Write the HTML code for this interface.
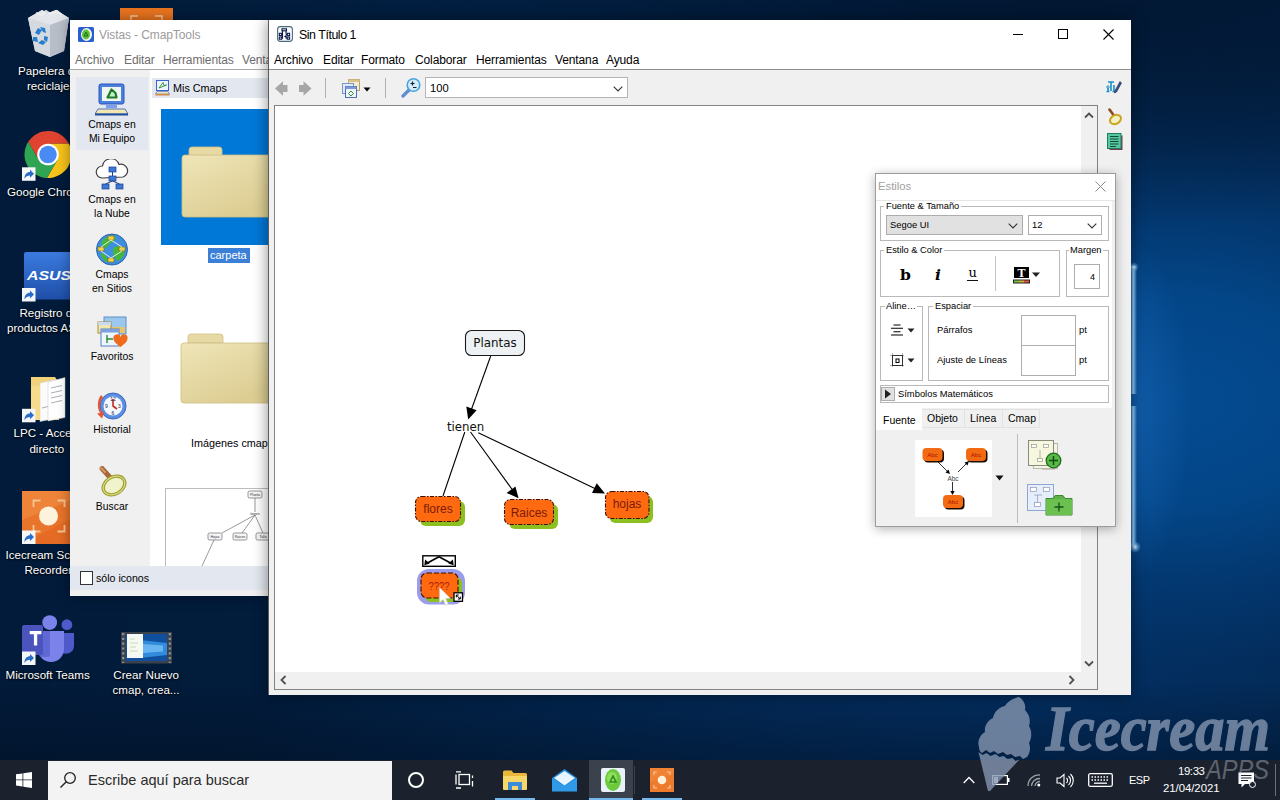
<!DOCTYPE html>
<html lang="es">
<head>
<meta charset="utf-8">
<title>CmapTools - Sin Título 1</title>
<style>
*{box-sizing:border-box;margin:0;padding:0}
html,body{width:1280px;height:800px;overflow:hidden}
body{font-family:"Liberation Sans","DejaVu Sans",sans-serif;font-size:12px;color:#000;position:relative;
background:#04132b}
.abs{position:absolute}
.t{position:absolute;white-space:nowrap;line-height:1}
#desk{position:absolute;left:0;top:0;width:1280px;height:800px;overflow:hidden;
background:
radial-gradient(ellipse 800px 240px at 1050px -10px,rgba(1,16,36,.8) 0,rgba(1,16,36,.55) 45%,rgba(1,16,36,0) 100%),
linear-gradient(0deg,rgba(1,14,32,.45) 40px,rgba(1,14,32,0) 120px),
radial-gradient(ellipse 60px 170px at 1131px 410px,rgba(30,110,195,.5),rgba(20,90,170,0) 100%),
radial-gradient(ellipse 500px 340px at 1180px 400px,#044b90 0,#034688 30%,rgba(3,58,116,.8) 55%,rgba(3,48,100,.4) 78%,rgba(2,44,92,0) 100%),
linear-gradient(90deg,#021b3a 0,#021c3c 250px,#02244c 500px,#032c5c 800px,#032f62 1050px,#032a56 1280px)}
.dl{position:absolute;color:#fff;font-size:11.6px;line-height:15px;text-align:left;white-space:nowrap;text-shadow:0 1px 2px rgba(0,0,0,.9),0 0 2px rgba(0,0,0,.6)}
/* taskbar */
#tb{position:absolute;left:0;top:760px;width:1280px;height:40px;background:#1b222d}
#search{position:absolute;left:48px;top:1px;width:344px;height:39px;background:#f3f3f3}
.win{position:absolute;background:#f0f0f0}
.menu{position:absolute;font-size:12px;letter-spacing:-.12px;white-space:nowrap;line-height:14px}
.fs{position:absolute;border:1px solid #b9b9b9}
.fs>span{position:absolute;top:-6px;left:3px;background:#fff;padding:0 2px;font-size:9.3px;line-height:10px;white-space:nowrap;color:#000}
.s9{font-size:9.4px}
</style>
</head>
<body>
<div id="desk">
<svg class="abs" style="left:0;top:0" width="280" height="760" viewBox="0 0 280 760" font-family="'Liberation Sans',sans-serif">
<defs>
 <g id="sc"><rect x="0" y="0" width="13.500" height="13.500" fill="#f4f6f8"/><path d="M2.500 11.500c0-4.500 2.200-6.800 5.500-6.800V2.500l4 4-4 4V8.200c-2.400 0-4.300 1-5.500 3.300z" fill="#2a6cc8"/></g>
 <linearGradient id="asg" x1="0" y1="0" x2="0" y2="1"><stop offset="0" stop-color="#3b7be0"/><stop offset="1" stop-color="#1f4fa8"/></linearGradient>
</defs>
<!-- orange behind -->
<rect x="120" y="8" width="53" height="14" fill="#e8731f"/>
<path d="M131 22v-6h7M155 16h7v6" stroke="#f7c79a" stroke-width="1.500" fill="none"/>
<!-- recycle bin -->
<g opacity=".93">
 <path d="M28 18l14-8 6 3 8-3 13 8-5 33-14 6-15-6z" fill="#dfe3e8"/>
 <path d="M28 18l14-8 6 3 8-3 13 8-19 7z" fill="#f3f5f7"/>
 <path d="M50 25l19-7-5 33-14 6z" fill="#c5cbd3"/>
 <path d="M28 18l22 7v32l-15-6z" fill="#e6e9ed"/>
 <path d="M36 13l5 2 5-4 5 3 6-3 5 4" stroke="#fff" stroke-width="2" fill="none" opacity=".9"/>
 <g fill="#2a86d8"><path d="M35 33l3-5 4 2-3 5zM40 27l5 1 1 5-3-1zM33 37l4 0 1 5-5-1zM38 43l5 2 3-3-4-2zM44 36l4 1-1 5-3-2z"/></g>
</g>
<!-- chrome -->
<g>
 <path d="M28.210 141.830A23.500 23.500 0 0 1 68.870 143.700L48 143.700 48 154.500 38.650 159.900z" fill="#e0432f"/>
 <path d="M68.870 143.700A23.500 23.500 0 0 1 46.920 177.970L57.350 159.900 48 154.500 48 143.700z" fill="#f6c31a"/>
 <path d="M46.920 177.970A23.500 23.500 0 0 1 28.210 141.830L38.650 159.900 48 154.500 57.350 159.900z" fill="#2fa553"/>
 <circle cx="48" cy="154.500" r="10.800" fill="#fff"/><circle cx="48" cy="154.500" r="8.700" fill="#4a8af4"/>
 <use href="#sc" x="22" y="167.300"/>
</g>
<!-- asus -->
<g>
 <rect x="24" y="252" width="48" height="47.500" rx="2" fill="url(#asg)"/>
 <text x="27" y="280" font-size="13" font-weight="bold" font-style="italic" fill="#fff" textLength="44" lengthAdjust="spacingAndGlyphs">ASUS</text>
 <use href="#sc" x="22" y="288"/>
</g>
<!-- LPC -->
<g>
 <path d="M31 377h24l2 3h2v40H31z" fill="#f1d27a"/>
 <path d="M40 383l15-3.500v39l-15 3z" fill="#fbfbfb" stroke="#c9c9c9" stroke-width=".5"/>
 <path d="M48 382l17-4.500v40l-17 3.500z" fill="#fff" stroke="#c4c4c4" stroke-width=".5"/>
 <path d="M31 386h9v34h-9z" fill="#f6db8a"/>
 <path d="M51 388l11-2.500M51 393l11-2.500M51 398l11-2.500M51 403l11-2.500M42 408l6-1.500" stroke="#a9afb8" stroke-width="1"/>
 <use href="#sc" x="22" y="408.800"/>
</g>
<!-- icecream -->
<g>
 <rect x="22" y="491" width="50" height="53" fill="#e9742c"/>
 <path d="M22 520L72 500V491H22z" fill="#f08a40" opacity=".7"/>
 <path d="M22 544l50-26v26z" fill="#e2651f" opacity=".6"/>
 <circle cx="48.500" cy="516" r="9.500" fill="#fdf3dc"/>
 <path d="M33.500 507v-6.500h7M57.500 500.500h7v6.500M64.500 525v6.500h-7M40.500 531.500h-7V525" stroke="#f8c690" stroke-width="1.800" fill="none"/>
 <use href="#sc" x="22" y="530.500"/>
</g>
<!-- teams -->
<g>
 <circle cx="66.900" cy="624.700" r="5.400" fill="#5059c9"/>
 <path d="M61 633h13v13a8 8 0 0 1-13 6z" fill="#5059c9"/>
 <circle cx="49.700" cy="622.600" r="7.400" fill="#7b83eb"/>
 <path d="M38 631h26v18a13 13 0 0 1-26 0z" fill="#7b83eb"/>
 <path d="M38 631h12v24a2 2 0 0 1-2 2H40a13 13 0 0 1-2-8z" fill="#5a62d0" opacity=".8"/>
 <rect x="22" y="625" width="21" height="30" rx="2" fill="#4b53bc"/>
 <path d="M29.700 631h11.700v3.200h-4.200v11.400h-3.300v-11.400h-4.200z" fill="#fff"/>
 <use href="#sc" x="22" y="651.500"/>
</g>
<!-- video -->
<g>
 <rect x="121" y="632" width="51" height="31.500" fill="#3c424c"/>
 <rect x="126" y="634" width="41" height="27" fill="#0f4f9e"/>
 <path d="M140 640l27 3v12l-27 3z" fill="#3ea0f0" opacity=".75"/>
 <path d="M143 644l20 1.500v6l-20 1.500z" fill="#8fd0ff" opacity=".6"/>
 <rect x="127" y="634" width="16" height="24" fill="#f6f8f4"/>
 <path d="M123.200 633v30M169.800 633v30" stroke="#8d939c" stroke-width="2.200" stroke-dasharray="2.200 2.600"/>
 <path d="M130 639h5M130 643h8M130 647h6M130 651h8" stroke="#bfe0b0" stroke-width="1.200"/>
</g>
</svg>
<div class="dl" style="left:18px;top:63px">Papelera de</div>
<div class="dl" style="left:27px;top:78px">reciclaje</div>
<div class="dl" style="left:7px;top:184px">Google Chrome</div>
<div class="dl" style="left:19.4px;top:305px">Registro de</div>
<div class="dl" style="left:7px;top:320px">productos AS…</div>
<div class="dl" style="left:13.5px;top:425px">LPC - Acceso</div>
<div class="dl" style="left:29.4px;top:441px">directo</div>
<div class="dl" style="left:5.6px;top:547px">Icecream Screen</div>
<div class="dl" style="left:24.4px;top:562px">Recorder</div>
<div class="dl" style="left:5.5px;top:667px">Microsoft Teams</div>
<div class="dl" style="left:113.3px;top:667px">Crear Nuevo</div>
<div class="dl" style="left:112.5px;top:682px">cmap, crea...</div>
<!-- windows light strip -->
<div class="abs" style="left:1131px;top:266px;width:6px;height:128px;background:linear-gradient(90deg,rgba(40,110,190,.5),#9fd0f4 35%,#5aa2e0 60%,rgba(30,100,180,0))"></div>
<div class="abs" style="left:1131px;top:406px;width:6px;height:140px;background:linear-gradient(90deg,rgba(40,110,190,.5),#9fd0f4 35%,#5aa2e0 60%,rgba(30,100,180,0))"></div>
<div class="abs" style="left:1129px;top:541px;width:12px;height:12px;border-radius:50%;background:radial-gradient(circle,#e8f6ff 0,rgba(120,190,240,.6) 35%,rgba(60,140,220,0) 70%)"></div>
<div class="abs" style="left:1129px;top:262px;width:10px;height:10px;border-radius:50%;background:radial-gradient(circle,#d8eeff 0,rgba(120,190,240,.5) 35%,rgba(60,140,220,0) 70%)"></div>
<!-- watermark -->
<svg class="abs" style="left:0;top:0;z-index:50" width="1280" height="800" viewBox="0 0 1280 800">
 <g fill="#8496b0" opacity=".8">
  <path d="M1019 697c-5 1-11 4-14 9-6 1-11 6-12 12-5 2-9 8-8 14-5 3-8 9-6 15 0 3 1 5 3 6l4-3 4 3 4-2 4 3 5-2 4 3 4-1 4 3 5-1 3 3 4-2c3-4 4-9 2-14 3-5 3-12 0-17 2-6 0-12-4-16 1-5-1-10-6-13z"/>
  <path d="M978.500 752l4 3 4-2 4 3 5-2 4 3 4-1 4 3 5-1 3 3 4-1.500L990.500 790.500q-1.700 1.800-2.800-.5z"/>
 </g>
 <text x="1046" y="750" font-family="'Liberation Serif',serif" font-style="italic" font-weight="bold" font-size="64" fill="#8496b0" stroke="#8496b0" stroke-width="1.400" opacity=".8" textLength="224" lengthAdjust="spacingAndGlyphs">Icecream</text>
 <text x="1206" y="779" font-family="'Liberation Sans',sans-serif" font-style="italic" font-size="27" fill="#c8d0da" opacity=".38" textLength="63" lengthAdjust="spacingAndGlyphs">APPS</text>
</svg>

</div>
<div class="win" id="vis" style="left:70px;top:20px;width:200px;height:576px;box-shadow:0 0 12px rgba(0,0,0,.4);overflow:hidden">
 <div class="abs" style="left:0;top:0;width:200px;height:50px;background:#fff"></div>
 <div class="abs" style="left:0;top:49px;width:200px;height:1px;background:#a9a9a9"></div>
 <svg class="abs" style="left:8px;top:7px" width="16" height="15" viewBox="0 0 16 15"><rect x="0" y="0" width="16" height="15" rx="1.500" fill="#2a5fd0"/><ellipse cx="8.500" cy="7.500" rx="5.500" ry="6.500" fill="#f2f6f0"/><ellipse cx="8" cy="7.500" rx="4" ry="5" fill="#5fc23a"/><path d="M6 9l2-4 2 4z" fill="none" stroke="#1d6a1a" stroke-width="1"/></svg>
 <div class="t" style="left:29px;top:8px;font-size:12px;line-height:14px;color:#9b9b9b;letter-spacing:-.1px">Vistas - CmapTools</div>
 <div class="menu" style="left:5px;top:33px;color:#6d6d6d">Archivo</div>
 <div class="menu" style="left:54px;top:33px;color:#6d6d6d">Editar</div>
 <div class="menu" style="left:93px;top:33px;color:#6d6d6d">Herramientas</div>
 <div class="menu" style="left:172px;top:33px;color:#6d6d6d">Ventana</div>
 <!-- sidebar -->
 <div class="abs" style="left:6px;top:57px;width:72px;height:73px;background:#e3e7ef"></div>
 <div class="abs" style="left:80px;top:50px;width:120px;height:496px;background:#fff"></div>
 <!-- side icons -->
 <svg class="abs" style="left:25px;top:63px" width="34" height="33" viewBox="0 0 34 33"><rect x="4" y="1" width="25" height="20" rx="2" fill="#4d7fe0" stroke="#2c55b8"/><rect x="7" y="4" width="19" height="14" fill="#eef7ee"/><path d="M12.500 14.500l4-8 4 3.500 1 4.500z" fill="#bfeecf" stroke="#1f7a2a" stroke-width="2.200" stroke-linejoin="round"/><rect x="11" y="22" width="11" height="3" fill="#7aa0e8"/><path d="M3 26h27l3 5H0z" fill="#f3e7b0" stroke="#2c55b8" stroke-width=".8"/><rect x="0" y="30.500" width="33" height="2" fill="#1f4f9e"/></svg>
 <div class="t" style="left:0;width:84px;top:98px;text-align:center;font-size:10.400px;line-height:14px">Cmaps en<br>Mi Equipo</div>
 <svg class="abs" style="left:24px;top:139px" width="36" height="32" viewBox="0 0 36 32"><path d="M8 19a6 6 0 0 1 .5-12A8.500 8.500 0 0 1 25 5.500 6.500 6.500 0 0 1 29 18z" fill="#fff" stroke="#3d3d3d" stroke-width="1.200"/><rect x="15" y="8" width="7" height="5" fill="#3d78d8" stroke="#1d3f8a" stroke-width=".7"/><rect x="8" y="25" width="7" height="5" fill="#3d78d8" stroke="#1d3f8a" stroke-width=".7"/><rect x="22" y="25" width="7" height="5" fill="#3d78d8" stroke="#1d3f8a" stroke-width=".7"/><rect x="15" y="17" width="7" height="5" fill="#3d78d8" stroke="#1d3f8a" stroke-width=".7"/><path d="M18.500 13v4M18.500 22l-7 3M18.500 22l7 3" stroke="#1d3f8a" stroke-width="1" fill="none"/></svg>
 <div class="t" style="left:0;width:84px;top:173px;text-align:center;font-size:10.400px;line-height:14px">Cmaps en<br>la Nube</div>
 <svg class="abs" style="left:25px;top:213px" width="34" height="33" viewBox="0 0 34 33"><circle cx="17" cy="16.500" r="15.500" fill="#3f8fe0" stroke="#2a62b0"/><path d="M7 8c4-5 9-6 13-5 2 3-1 6-4 7s-3 5-6 5-4-4-3-7zM20 14c3-2 8-1 10 2 0 6-3 10-7 12-3-2-5-6-5-9s0-4 2-5zM6 20c2 0 5 2 6 5s0 4-1 4c-3-2-5-5-5-9z" fill="#46b53c"/><g fill="#f0d34a" stroke="#7a6510" stroke-width=".6"><rect x="13" y="3" width="6" height="4"/><rect x="3" y="14" width="6" height="4"/><rect x="24" y="14" width="6" height="4"/><rect x="13" y="25" width="6" height="4"/></g><path d="M16 7L6 14M16 7l11 7M6 18l10 7M27 18l-11 7" stroke="#f5f5f5" stroke-width=".9" fill="none"/></svg>
 <div class="t" style="left:0;width:84px;top:248px;text-align:center;font-size:10.400px;line-height:14px">Cmaps<br>en Sitios</div>
 <svg class="abs" style="left:26px;top:295.500px" width="33" height="33" viewBox="0 0 33 33"><rect x="8" y="1" width="22" height="17" fill="#9cc7ee" stroke="#5a8fc8"/><rect x="9" y="11" width="20" height="6" fill="#e9c46a"/><rect x="2" y="6" width="13" height="11" fill="#f3e7b0" stroke="#a48a3a"/><rect x="2" y="6" width="13" height="3" fill="#c9d9f0"/><rect x="5" y="13" width="18" height="17" fill="#eef5ff" stroke="#5a7fc0"/><rect x="5" y="13" width="18" height="3.500" fill="#7da1dc"/><path d="M11 19v8M11 23h6" stroke="#2e8a2e" stroke-width="1.400"/><path d="M24.500 31c-4-3-7-5.500-7-8.500a3.500 3.500 0 0 1 7-1.200 3.500 3.500 0 0 1 7 1.200c0 3-3 5.500-7 8.500z" fill="#ee6a1c"/></svg>
 <div class="t" style="left:0;width:84px;top:331px;text-align:center;font-size:10.400px;line-height:12px">Favoritos</div>
 <svg class="abs" style="left:25px;top:371px" width="34" height="30" viewBox="0 0 34 30"><circle cx="18" cy="15" r="13" fill="#5c8fe6" stroke="#3c64b8"/><circle cx="18" cy="15" r="9.500" fill="#f4f8ff"/><path d="M18 8v7l4 3" stroke="#c82a1c" stroke-width="1.600" fill="none"/><path d="M6 4C2 9 2 17 5 22l-3 .5 5 5 2.500-7-2.500 1C4 17 5 10 8 6z" fill="#e05a3a"/><g font-size="5" font-family="'Liberation Sans',sans-serif" fill="#223" text-anchor="middle"><text x="18" y="10">12</text><text x="24.500" y="17">3</text><text x="18" y="23.500">6</text><text x="11.500" y="17">9</text></g></svg>
 <div class="t" style="left:0;width:84px;top:404px;text-align:center;font-size:10.400px;line-height:12px">Historial</div>
 <svg class="abs" style="left:27px;top:446px" width="32" height="32" viewBox="0 0 32 32"><path d="M5 2.500l9 10" stroke="#a8683a" stroke-width="5" stroke-linecap="round"/><path d="M4 2l4 4" stroke="#d09a6a" stroke-width="2" stroke-linecap="round"/><ellipse cx="17" cy="19.500" rx="11.500" ry="8.500" transform="rotate(-30 17 19.500)" fill="#f1f3cc" stroke="#9c9e34" stroke-width="3.400"/><ellipse cx="17" cy="19.500" rx="11.500" ry="8.500" transform="rotate(-30 17 19.500)" fill="none" stroke="#d6da78" stroke-width="1.200"/></svg>
 <div class="t" style="left:0;width:84px;top:481px;text-align:center;font-size:10.400px;line-height:12px">Buscar</div>
 <!-- content -->
 <div class="abs" style="left:82px;top:58px;width:118px;height:20px;background:#e3e7ef"></div>
 <svg class="abs" style="left:85px;top:60px" width="15" height="16" viewBox="0 0 15 16"><rect x="1.500" y=".5" width="12" height="10" fill="#eef4ff" stroke="#3a62c8"/><path d="M4 8l4-5.500 1 3 2.500-.5z" fill="none" stroke="#2a8a2a" stroke-width=".9"/><path d="M2 11.500h11l1.500 2.500H.5z" fill="#f3e7b0" stroke="#3a62c8" stroke-width=".6"/><rect x=".5" y="14" width="14" height="1.500" fill="#d88a4a"/></svg>
 <div class="t" style="left:103px;top:62px;font-size:10.800px;line-height:12px">Mis Cmaps</div>
 <div class="abs" style="left:91px;top:89px;width:109px;height:136px;background:#0078d7"></div>
 <svg class="abs" style="left:111px;top:126px" width="90" height="72" viewBox="0 0 90 72"><defs><linearGradient id="fg" x1="0" y1="0" x2=".6" y2="1"><stop offset="0" stop-color="#efe5b8"/><stop offset="1" stop-color="#dccd92"/></linearGradient></defs><path d="M8 4q0-3 3-3h27q3 0 3 3v6H8z" fill="#e6d9a4" stroke="#cfc084" stroke-width=".8"/><path d="M1 12q0-3 3-3h86v62H4q-3 0-3-3z" fill="url(#fg)" stroke="#cdbd80" stroke-width=".8"/></svg>
 <div class="abs" style="left:138px;top:228px;width:42px;height:15px;background:#3c7fd6"></div>
 <div class="t" style="left:140px;top:229px;font-size:11px;line-height:13px;color:#fff">carpeta</div>
 <svg class="abs" style="left:110px;top:313px" width="90" height="72" viewBox="0 0 90 72"><path d="M8 4q0-3 3-3h29q3 0 3 3v6H8z" fill="#e6d9a4" stroke="#cfc084" stroke-width=".8"/><path d="M1 13q0-3 3-3h86v60H4q-3 0-3-3z" fill="url(#fg)" stroke="#cdbd80" stroke-width=".8"/></svg>
 <div class="t" style="left:121px;top:417px;font-size:10.800px;line-height:12px">Imágenes cmap</div>
 <div class="abs" style="left:95px;top:468px;width:110px;height:80px;background:#fff;border:1px solid #bcbcbc"></div>
 <svg class="abs" style="left:96px;top:469px" width="104" height="77" viewBox="0 0 104 77" font-family="'Liberation Sans',sans-serif"><g fill="#f4f6f8" stroke="#555" stroke-width=".6"><rect x="82" y="2" width="14" height="7" rx="1.500"/><rect x="42" y="44" width="14" height="7" rx="1.500"/><rect x="67" y="44" width="14" height="7" rx="1.500"/><rect x="90" y="44" width="14" height="7" rx="1.500"/></g><path d="M89 9v14M89 26L56 44M89 26L76 44M89 26l8 18M48 51L36 77" stroke="#555" stroke-width=".6" fill="none"/><g font-size="3.500" fill="#333" text-anchor="middle"><text x="89" y="7">Planta</text><text x="89" y="26">tienen</text><text x="49" y="49">Hojas</text><text x="74" y="49">Raices</text><text x="97" y="49">Tallo</text></g></svg>
 <div class="abs" style="left:0;top:546px;width:200px;height:24px;background:#e3e7ef"></div>
 <div class="abs" style="left:10px;top:551px;width:13px;height:14px;background:#fff;border:1px solid #333"></div>
 <div class="t" style="left:26px;top:552px;font-size:10.600px;line-height:12px">sólo iconos</div>
</div>

<div class="win" id="main" style="left:268px;top:20px;width:863px;height:675px;border-left:1px solid #5c5c5c;box-shadow:0 0 14px rgba(0,0,0,.45)">
 <div class="abs" style="left:0;top:0;width:862px;height:49px;background:#fff"></div>
 <div class="abs" style="left:0;top:49px;width:862px;height:1px;background:#8e8e8e"></div>
 <!-- title icon -->
 <svg class="abs" style="left:8px;top:6px" width="16" height="16" viewBox="0 0 16 16"><rect x=".6" y=".6" width="14.800" height="14.800" rx="2.800" fill="#fbfdff" stroke="#4b6b7c" stroke-width="1.100"/><g stroke="#0d1846" fill="none" stroke-width="1.100"><rect x="5" y="2.800" width="4.500" height="2"/><path d="M5.500 4.800v7.700M9 4.800v3M7.200 10.500h2"/><rect x="2.300" y="7.300" width="2.400" height="2.200"/><rect x="2.300" y="11" width="2.400" height="2.200"/><rect x="10.200" y="7.300" width="2.400" height="2.200"/><rect x="10.200" y="11" width="2.400" height="2.200"/><path d="M4.700 8.400h1M4.700 12h1M9 8.400h1.200M9 8.400v3.600h1.200"/></g></svg>
 <div class="t" style="left:30px;top:8px;font-size:12.4px;letter-spacing:-.45px;line-height:14px">Sin Título 1</div>
 <!-- controls -->
 <div class="abs" style="left:744px;top:14px;width:10px;height:1px;background:#000"></div>
 <div class="abs" style="left:789px;top:9px;width:10px;height:10px;border:1px solid #000"></div>
 <svg class="abs" style="left:834px;top:9px" width="11" height="11" viewBox="0 0 11 11"><path d="M.5.5l10 10M10.500.5l-10 10" stroke="#000" stroke-width="1.100"/></svg>
 <!-- menu -->
 <div class="menu" style="left:5px;top:33px">Archivo</div>
 <div class="menu" style="left:54px;top:33px">Editar</div>
 <div class="menu" style="left:92px;top:33px">Formato</div>
 <div class="menu" style="left:146px;top:33px">Colaborar</div>
 <div class="menu" style="left:207px;top:33px">Herramientas</div>
 <div class="menu" style="left:286px;top:33px">Ventana</div>
 <div class="menu" style="left:337px;top:33px">Ayuda</div>
 <!-- toolbar -->
 <svg class="abs" style="left:5px;top:60px" width="42" height="16" viewBox="0 0 42 16"><path d="M1 8.500l8-7.300v3.800h4.500v7H9v3.800z" fill="#a6a6a6"/><path d="M37.500 8.500l-8-7.300v3.800H25v7h4.500v3.800z" fill="#a6a6a6"/></svg>
 <div class="abs" style="left:56px;top:58px;width:1px;height:20px;background:#b0b0b0"></div>
 <svg class="abs" style="left:73px;top:59px" width="30" height="20" viewBox="0 0 30 20"><rect x="6.500" y=".5" width="11" height="11" fill="#f3ecd2" stroke="#b9a26a"/><rect x="6.500" y=".5" width="11" height="2.500" fill="#d9c48a"/><rect x=".5" y="4.500" width="11" height="10" fill="#dfe9fa" stroke="#7f97c8"/><rect x="3.500" y="7.500" width="11" height="11" fill="#eef4ff" stroke="#4f6fb5"/><rect x="3.500" y="7.500" width="11" height="2.500" fill="#7d9ad6"/><path d="M6.500 14.500l2.500-2.500 2.500 2.500-2.500 2.500z" fill="none" stroke="#3a8a3a"/><path d="M21.500 8.500h7l-3.500 4z" fill="#000"/></svg>
 <div class="abs" style="left:116px;top:58px;width:1px;height:20px;background:#b0b0b0"></div>
 <svg class="abs" style="left:132px;top:57px" width="22" height="22" viewBox="0 0 22 22"><path d="M2 19l6-6" stroke="#5d8fd0" stroke-width="3.200" stroke-linecap="round"/><circle cx="12.500" cy="8" r="6.300" fill="#d3ecfa" stroke="#4aa3dd" stroke-width="1.600"/><path d="M9.500 6.500h4M11.500 4.500v4M12 10.500h3.500" stroke="#10203a" stroke-width="1.200"/></svg>
 <div class="abs" style="left:156px;top:57px;width:203px;height:21px;background:#fff;border:1px solid #b4b4b4"></div>
 <div class="t" style="left:161px;top:62px;font-size:11.200px;line-height:12px">100</div>
 <svg class="abs" style="left:344px;top:66px" width="10" height="6" viewBox="0 0 10 6"><path d="M.7.700l4.300 4.300 4.300-4.300" fill="none" stroke="#333" stroke-width="1.100"/></svg>
 <!-- right tools -->
 <svg class="abs" style="left:836px;top:60px" width="17" height="15" viewBox="0 0 17 15"><path d="M3 2h6M6 2v9M1.500 11.500h3M7.500 11.500h3M3 11V8M9 11V5" stroke="#1a8fc8" stroke-width="1.600" fill="none"/><circle cx="3" cy="7" r="1.200" fill="none" stroke="#1a8fc8"/><path d="M15 1.500l1.500 1.500-5 9-2 1 .5-2.300z" fill="#3d4c84" stroke="#1d2750" stroke-width=".6"/></svg>
 <svg class="abs" style="left:838px;top:88px" width="16" height="18" viewBox="0 0 16 18"><path d="M2.500 1.500l4 5.500" stroke="#8a4a22" stroke-width="2.600" stroke-linecap="round"/><ellipse cx="8.500" cy="11.500" rx="5.800" ry="4.300" transform="rotate(-28 8.500 11.500)" fill="#f5efc4" stroke="#c9a51f" stroke-width="2"/></svg>
 <svg class="abs" style="left:838px;top:113px" width="17" height="18" viewBox="0 0 17 18"><rect x="2.500" y="2.500" width="13" height="14.500" fill="#7a3c4c"/><rect x=".5" y=".5" width="13.500" height="15" fill="#58c7a0" stroke="#1f7d5d"/><path d="M3 3.500h8.500M3 6h8.500M3 8.500h8.500M3 11h8.500M3 13.500h6" stroke="#0d4d38" stroke-width="1.100"/></svg>
 <!-- canvas -->
 <div class="abs" style="left:5px;top:85px;width:824px;height:585px;background:#fff;border:1px solid #828282"></div>
 <div class="abs" style="left:812px;top:86px;width:16px;height:583px;background:#f0f0f0"></div>
 <div class="abs" style="left:6px;top:652px;width:822px;height:17px;background:#f0f0f0"></div>
 <svg class="abs" style="left:815px;top:92px" width="10" height="7" viewBox="0 0 10 7"><path d="M1 5.500l4-4 4 4" fill="none" stroke="#505050" stroke-width="1.800"/></svg>
 <svg class="abs" style="left:815px;top:640px" width="10" height="7" viewBox="0 0 10 7"><path d="M1 1.500l4 4 4-4" fill="none" stroke="#505050" stroke-width="1.800"/></svg>
 <svg class="abs" style="left:11px;top:655px" width="7" height="10" viewBox="0 0 7 10"><path d="M5.500 1l-4 4 4 4" fill="none" stroke="#505050" stroke-width="1.800"/></svg>
 <svg class="abs" style="left:799px;top:655px" width="7" height="10" viewBox="0 0 7 10"><path d="M1.500 1l4 4-4 4" fill="none" stroke="#505050" stroke-width="1.800"/></svg>
 <svg class="abs" style="left:-269px;top:-20px" width="1280" height="800" viewBox="0 0 1280 800" font-family="'DejaVu Sans','Liberation Sans',sans-serif">
 <g stroke="#000" stroke-width="1.100" fill="none">
  <path d="M490.700 356L470.500 412"/>
  <path d="M464.800 432L443 496"/>
  <path d="M470.500 432L514 492"/>
  <path d="M478.300 432.700L598 490"/>
 </g>
 <path d="M468.200 419.500L466.300 406.500 476.600 410.200z" fill="#000"/>
 <path d="M518.600 498.300L506.600 493 515.400 486.600z" fill="#000"/>
 <path d="M605 493.500L592 493 596.700 483.300z" fill="#000"/>
 <rect x="465.500" y="330.500" width="59" height="25" rx="6" fill="#edf1f3" stroke="#1a1a1a" stroke-width="1.100"/>
 <text x="495" y="347.200" font-size="11.900" text-anchor="middle" fill="#111">Plantas</text>
 <text x="465.600" y="430.700" font-size="11.800" text-anchor="middle" fill="#111">tienen</text>
 <g font-family="'Liberation Sans',sans-serif" font-size="12" fill="#7a1a08" text-anchor="middle">
  <rect x="420" y="501" width="45" height="25" rx="6" fill="#8cc021"/>
  <rect x="415.500" y="496.500" width="45" height="25" rx="6" fill="#ff6a10" stroke="#3c0d00" stroke-width="1.100" stroke-dasharray="4 1.500 1.500 1.500"/>
  <text x="438" y="513.200">flores</text>
  <rect x="509" y="504" width="49" height="25" rx="6" fill="#8cc021"/>
  <rect x="504.500" y="499.500" width="49" height="25" rx="6" fill="#ff6a10" stroke="#3c0d00" stroke-width="1.100" stroke-dasharray="4 1.500 1.500 1.500"/>
  <text x="529" y="516.700">Raices</text>
  <rect x="609.500" y="496" width="43.500" height="27" rx="6" fill="#8cc021"/>
  <rect x="605.500" y="491.500" width="43.500" height="27" rx="6" fill="#ff6a10" stroke="#3c0d00" stroke-width="1.100" stroke-dasharray="4 1.500 1.500 1.500"/>
  <text x="627" y="508.300">hojas</text>
  <!-- new node -->
  <rect x="417" y="569" width="48" height="35.500" rx="12" fill="#9c9cec"/>
  <rect x="425" y="577" width="37" height="25" rx="6" fill="#8cc021"/>
  <rect x="421" y="573" width="37" height="25" rx="6" fill="#ff6a10" stroke="#3c0d00" stroke-width="1.100" stroke-dasharray="5 2"/>
  <text x="439" y="590.300" font-size="10.200" fill="#b01c08" textLength="21" lengthAdjust="spacingAndGlyphs">????</text>
 </g>
 <!-- link handle -->
 <rect x="422.800" y="555.800" width="32.500" height="10.500" fill="#fff" stroke="#000" stroke-width="1.400"/>
 <path d="M439 556.800L427 563.200M439 556.800L451 563.200" stroke="#000" stroke-width="1.700" fill="none"/>
 <path d="M424.300 565.200l.8-5.700 4.600 4zM453.700 565.200l-.8-5.700-4.600 4z" fill="#000"/>
 <!-- resize handle -->
 <rect x="454" y="592.800" width="8.500" height="8.500" fill="#fff" stroke="#000" stroke-width="1.300"/>
 <path d="M456.300 595l4 4M456.300 595h2.400M456.300 595v2.400M460.300 599h-2.400M460.300 599v-2.400" stroke="#000" stroke-width="1" fill="none"/>
 <!-- cursor -->
 <path d="M439.500 587.500v15.500l3.600-3.400 2.600 5.900 2.600-1.200-2.600-5.700h4.900z" fill="#fff" stroke="#c8c8c8" stroke-width=".6"/>
</svg>

</div>

<div class="abs" id="est" style="left:875px;top:173px;width:241px;height:354px;background:#f0f0f0;border:1px solid #9c9c9c;box-shadow:0 2px 10px rgba(0,0,0,.3)">
 <div class="abs" style="left:0;top:0;width:239px;height:26px;background:#fff"></div>
 <div class="abs" style="left:0;top:26px;width:236px;height:208px;background:#fff"></div>
 <div class="abs" style="left:0;top:26px;width:239px;height:1px;background:#e6e6e6"></div>
 <div class="t" style="left:2px;top:6px;font-size:11.3px;line-height:13px;color:#a2a2a2">Estilos</div>
 <svg class="abs" style="left:219px;top:7px" width="11" height="11" viewBox="0 0 11 11"><path d="M.5.5l10 10M10.500.5l-10 10" stroke="#8a8a8a" stroke-width="1"/></svg>
 <!-- Fuente & Tamaño -->
 <div class="fs" style="left:4px;top:32px;width:229px;height:35px"><span>Fuente &amp; Tamaño</span></div>
 <div class="abs" style="left:10px;top:41px;width:137px;height:20px;background:#e1e1e1;border:1px solid #adadad"></div>
 <div class="t s9" style="left:14px;top:46px;line-height:10px">Segoe UI</div>
 <svg class="abs" style="left:132px;top:49px" width="10" height="6" viewBox="0 0 10 6"><path d="M.7.700l4.300 4.300 4.300-4.300" fill="none" stroke="#333" stroke-width="1.100"/></svg>
 <div class="abs" style="left:152px;top:41px;width:74px;height:20px;background:#fff;border:1px solid #adadad"></div>
 <div class="t s9" style="left:156px;top:46px;line-height:10px">12</div>
 <svg class="abs" style="left:211px;top:49px" width="10" height="6" viewBox="0 0 10 6"><path d="M.7.700l4.300 4.300 4.300-4.300" fill="none" stroke="#333" stroke-width="1.100"/></svg>
 <!-- Estilo & Color -->
 <div class="fs" style="left:4px;top:76px;width:180px;height:47px"><span>Estilo &amp; Color</span></div>
 <div class="t" style="left:24px;top:91.500px;font-family:'DejaVu Serif','Liberation Serif',serif;font-weight:bold;font-size:15.5px;line-height:18px">b</div>
 <div class="t" style="left:59px;top:91.500px;font-family:'DejaVu Serif','Liberation Serif',serif;font-weight:bold;font-style:italic;font-size:15.5px;line-height:18px">i</div>
 <div class="t" style="left:92.500px;top:91px;font-family:'DejaVu Serif','Liberation Serif',serif;font-size:13px;line-height:16px">u</div>
 <div class="abs" style="left:91px;top:105.500px;width:11px;height:1px;background:#111"></div>
 <div class="abs" style="left:119px;top:82px;width:1px;height:35px;background:#c4c4c4"></div>
 <svg class="abs" style="left:137px;top:92px" width="28" height="18" viewBox="0 0 28 18"><rect x="1" y="1" width="15" height="11" fill="#000"/><text x="8.500" y="10.800" font-family="'Liberation Serif',serif" font-weight="bold" font-size="12" text-anchor="middle" fill="#fff">T</text><rect x="0" y="13.500" width="17" height="4" fill="#222"/><rect x="1" y="14.500" width="5" height="2" fill="#6fbf4a"/><rect x="6" y="14.500" width="5" height="2" fill="#d8b23a"/><rect x="11" y="14.500" width="5" height="2" fill="#e0523a"/><path d="M19 6.500h8l-4 4.500z" fill="#222"/></svg>
 <div class="fs" style="left:190px;top:76px;width:43px;height:47px"><span style="left:2px;padding:0 1px">Margen</span></div>
 <div class="abs" style="left:198px;top:90px;width:26px;height:25px;background:#fff;border:1px solid #adadad"></div>
 <div class="t s9" style="left:214px;top:98px;line-height:10px;font-size:9px">4</div>
 <!-- Aline / Espaciar -->
 <div class="fs" style="left:4px;top:132px;width:43px;height:75px"><span style="left:4px;padding:0 1px">Aline…</span></div>
 <svg class="abs" style="left:14px;top:149px" width="28" height="14" viewBox="0 0 28 14"><path d="M3.500 2h7M1 5.300h12M3.500 8.700h7M1 12h12" stroke="#000" stroke-width="1.100"/><path d="M17.500 5.500h7l-3.500 4z" fill="#222"/></svg>
 <svg class="abs" style="left:14px;top:179px" width="28" height="16" viewBox="0 0 28 16"><rect x="2.500" y="2.500" width="10" height="10" fill="#fff" stroke="#333"/><path d="M.5 2.500h14M.5 12.500h14M2.500.5v14M12.500.5v14" stroke="#333" stroke-width=".8" stroke-dasharray="1 1"/><rect x="6" y="6" width="3" height="3.500" fill="none" stroke="#000"/><path d="M17.500 5.500h7l-3.500 4z" fill="#222"/></svg>
 <div class="fs" style="left:52px;top:132px;width:181px;height:75px"><span style="left:4px">Espaciar</span></div>
 <div class="t s9" style="left:61px;top:151px;line-height:10px">Párrafos</div>
 <div class="t s9" style="left:61px;top:181px;line-height:10px">Ajuste de Líneas</div>
 <div class="abs" style="left:145px;top:141px;width:55px;height:31px;background:#fff;border:1px solid #adadad"></div>
 <div class="abs" style="left:145px;top:171px;width:55px;height:31px;background:#fff;border:1px solid #adadad"></div>
 <div class="t s9" style="left:203px;top:151px;line-height:10px">pt</div>
 <div class="t s9" style="left:203px;top:181px;line-height:10px">pt</div>
 <!-- simbolos -->
 <div class="abs" style="left:4px;top:211px;width:229px;height:18px;background:#fff;border:1px solid #b9b9b9"></div>
 <div class="abs" style="left:5px;top:213px;width:14px;height:14px;background:#e1e1e1;border:1px solid #adadad"></div>
 <svg class="abs" style="left:8px;top:215px" width="8" height="10" viewBox="0 0 8 10"><path d="M1 .5l6 4.500-6 4.500z" fill="#222"/></svg>
 <div class="t s9" style="left:22px;top:215px;line-height:10px">Símbolos Matemáticos</div>
 <!-- tabs -->
 <div class="abs" style="left:0;top:234px;width:46px;height:22px;background:#fff"></div>
 <div class="abs" style="left:46px;top:235px;width:118px;height:19px;border-top:1px solid #e2e2e2;border-bottom:1px solid #e2e2e2;border-right:1px solid #e2e2e2"></div>
 <div class="abs" style="left:88px;top:236px;width:1px;height:17px;background:#e2e2e2"></div>
 <div class="abs" style="left:126px;top:236px;width:1px;height:17px;background:#e2e2e2"></div>
 <div class="t" style="left:7px;top:241px;font-size:10.500px;line-height:11px">Fuente</div>
 <div class="t" style="left:51px;top:239px;font-size:10.500px;line-height:11px">Objeto</div>
 <div class="t" style="left:94px;top:239px;font-size:10.500px;line-height:11px">Línea</div>
 <div class="t" style="left:132px;top:239px;font-size:10.500px;line-height:11px">Cmap</div>
 <!-- preview -->
 <div class="abs" style="left:39px;top:266px;width:77px;height:77px;background:#fff"></div>
 <svg class="abs" style="left:39px;top:266px" width="77" height="77" viewBox="0 0 77 77" font-family="'Liberation Sans',sans-serif">
  <g fill="#1a0a00"><rect x="9" y="9.500" width="20" height="13" rx="4"/><rect x="52.500" y="9.500" width="20" height="13" rx="4"/><rect x="29.500" y="56.500" width="20" height="13" rx="4"/></g>
  <g fill="#f26a12"><rect x="7.500" y="8" width="20" height="13" rx="4"/><rect x="51" y="8" width="20" height="13" rx="4"/><rect x="28" y="55" width="20" height="13" rx="4"/></g>
  <g font-size="6" fill="#b01000" text-anchor="middle"><text x="17.500" y="16.800">Abc</text><text x="61" y="16.800">Abc</text><text x="38" y="63.800">Abc</text></g>
  <text x="38" y="40.500" font-size="6.500" fill="#444" text-anchor="middle">Abc</text>
  <path d="M23 22l10 10M43 32l9-9M37.500 42v10" stroke="#000" stroke-width=".8" fill="none"/>
  <path d="M35 34l-4.500-1.500 3-3zM54 21l-1.500 4.500-3-3zM37.500 55l-2.200-4h4.400z" fill="#000"/>
 </svg>
 <svg class="abs" style="left:119px;top:301px" width="9" height="6" viewBox="0 0 9 6"><path d="M.5.5h8l-4 5z" fill="#111"/></svg>
 <div class="abs" style="left:141px;top:260px;width:1px;height:89px;background:#bdbdbd"></div>
 <svg class="abs" style="left:151px;top:265px" width="36" height="37" viewBox="0 0 36 37">
  <rect x="15.500" y="19.500" width="12" height="11" fill="#fafafa" stroke="#c9c9c0"/><rect x="6.500" y="4.500" width="24" height="25" fill="#f4f4e8" stroke="#b9b9a8"/>
  <rect x="1.500" y="1.500" width="25" height="25" fill="#f7f7e0" stroke="#8b8b7a"/>
  <rect x="4.500" y="5.500" width="5" height="3" fill="#fff" stroke="#9a9a8a" stroke-width=".7"/><rect x="16.500" y="5.500" width="5" height="3" fill="#fff" stroke="#9a9a8a" stroke-width=".7"/><rect x="10.500" y="19.500" width="5" height="3" fill="#fff" stroke="#9a9a8a" stroke-width=".7"/><path d="M13 11v8" stroke="#9a9a8a" stroke-width=".7"/>
  <circle cx="26.500" cy="21.500" r="7.300" fill="#58b947" stroke="#1f6b1f" stroke-width="1.300"/><path d="M26.500 17v9M22 21.500h9" stroke="#0e4a12" stroke-width="1.400"/>
 </svg>
 <svg class="abs" style="left:150px;top:309px" width="48" height="34" viewBox="0 0 48 34">
  <rect x="1.500" y="1.500" width="26" height="26" fill="#e6eefc" stroke="#8fa6d6"/>
  <rect x="4.500" y="4.500" width="6" height="4" fill="#fff" stroke="#8a96b0" stroke-width=".7"/><rect x="17.500" y="4.500" width="6" height="4" fill="#fff" stroke="#8a96b0" stroke-width=".7"/><rect x="8.500" y="19.500" width="6" height="4" fill="#fff" stroke="#8a96b0" stroke-width=".7"/><path d="M11.500 12v7M8 12h8" stroke="#8a96b0" stroke-width=".7"/>
  <path d="M20 15.500h7l2-3h8l2 3h7v16.500H20z" fill="#5fb04a" stroke="#3c8a30"/><rect x="20" y="16" width="26" height="16" rx="1.500" fill="#6cc04f"/>
  <path d="M33 19.500v9M28.500 24h9" stroke="#14501a" stroke-width="1.300"/>
 </svg>
</div>

<div id="tb">
 <svg class="abs" style="left:16px;top:12px" width="16" height="16" viewBox="0 0 16 16"><path d="M0 2.300l6.500-.9v6.100H0zM7.300 1.300L16 0v7.500H7.300zM0 8.300h6.500v6.200L0 13.600zM7.300 8.300H16V16l-8.700-1.200z" fill="#fff"/></svg>
 <div id="search"></div>
 <svg class="abs" style="left:59px;top:11px" width="18" height="18" viewBox="0 0 18 18"><circle cx="11" cy="7" r="5.300" fill="none" stroke="#222" stroke-width="1.300"/><path d="M7.300 10.800L1.500 16.600" stroke="#222" stroke-width="1.400"/></svg>
 <div class="t" style="left:88px;top:12px;font-size:14.500px;line-height:17px;color:#2b2b2b;letter-spacing:0">Escribe aquí para buscar</div>
 <div class="abs" style="left:408px;top:12px;width:16px;height:16px;border:2px solid #fff;border-radius:50%"></div>
 <svg class="abs" style="left:455px;top:11px" width="19" height="18" viewBox="0 0 19 18"><rect x="4" y="3.500" width="10.500" height="10" fill="none" stroke="#fff" stroke-width="1.300"/><path d="M1 .8h5M1 17h5M17.500 4.500v2.500M17.500 10v5.500M1 3.500v10" stroke="#fff" stroke-width="1.300" fill="none"/></svg>
 <!-- explorer -->
 <svg class="abs" style="left:503px;top:9px" width="24" height="22" viewBox="0 0 24 22"><path d="M0 3q0-1.500 1.500-1.500h7l2 2.500H22.500q1.500 0 1.500 1.500V20H0z" fill="#e9b73a"/><path d="M0 7h24v13q0 1-1 1H1q-1 0-1-1z" fill="#f7d76a"/><path d="M5 13h14v8H5z" fill="#3d8bd8"/><path d="M9 17h6v4H9z" fill="#f7d76a"/></svg>
 <div class="abs" style="left:495px;top:38px;width:40px;height:2px;background:#76b9ed"></div>
 <!-- mail -->
 <svg class="abs" style="left:552px;top:9px" width="25" height="23" viewBox="0 0 25 23"><path d="M0 9L12.500 0 25 9v13H0z" fill="#1f8ad8"/><path d="M2 9l10.500-7L23 9l-10.500 7.500z" fill="#e8f4ff"/><path d="M0 9l12.500 8.500L25 9v13.500H0z" fill="#2f9be8"/></svg>
 <!-- cmap active -->
 <div class="abs" style="left:589px;top:0;width:44px;height:40px;background:#3b424e"></div>
 <div class="abs" style="left:634px;top:6px;width:1px;height:28px;background:#3b424e"></div>
 <svg class="abs" style="left:601px;top:8px" width="24" height="24" viewBox="0 0 24 24"><rect width="24" height="24" rx="2" fill="#e9f1fb"/><ellipse cx="12" cy="12" rx="8" ry="11" fill="#6ccb3c"/><ellipse cx="11" cy="10" rx="5" ry="6" fill="#8fe05a"/><path d="M9 14l3-6 3 6z" fill="none" stroke="#2f8a1f" stroke-width="1.600"/></svg>
 <div class="abs" style="left:589px;top:38px;width:44px;height:2px;background:#76b9ed"></div>
 <!-- icecream -->
 <svg class="abs" style="left:650px;top:8px" width="24" height="24" viewBox="0 0 24 24"><rect width="24" height="24" fill="#ee7a2c"/><path d="M0 14L24 6V0H0z" fill="#f28a3a" opacity=".6"/><circle cx="12" cy="12" r="4.300" fill="#fdf1dc"/><path d="M4 7V4h3M17 4h3v3M20 17v3h-3M7 20H4v-3" stroke="#f8c79a" stroke-width="1.200" fill="none"/></svg>
 <div class="abs" style="left:642px;top:38px;width:40px;height:2px;background:#76b9ed"></div>
 <!-- tray -->
 <svg class="abs" style="left:963px;top:16px" width="12" height="8" viewBox="0 0 12 8"><path d="M.7 7L6 1.500 11.300 7" fill="none" stroke="#fff" stroke-width="1.300"/></svg>
 <svg class="abs" style="left:992px;top:15px" width="18" height="10" viewBox="0 0 18 10"><rect x=".6" y=".6" width="14.800" height="8.800" fill="none" stroke="#fff" stroke-width="1.200"/><rect x="16" y="3" width="1.500" height="4" fill="#fff"/><rect x="2" y="2" width="4" height="6" fill="#fff"/></svg>
 <svg class="abs" style="left:1027px;top:14px" width="14" height="13" viewBox="0 0 14 13"><path d="M1 12A11 11 0 0 1 13 1" stroke="#9aa0a8" stroke-width="1.300" fill="none"/><path d="M4.500 12A8 8 0 0 1 13 4.500" stroke="#9aa0a8" stroke-width="1.300" fill="none"/><path d="M8 12a5 5 0 0 1 5-4.500" stroke="#9aa0a8" stroke-width="1.300" fill="none"/><circle cx="11.800" cy="11" r="1.500" fill="#fff"/></svg>
 <svg class="abs" style="left:1056px;top:13px" width="18" height="15" viewBox="0 0 18 15"><path d="M1 5h3l4-3.500v12L4 10H1z" fill="none" stroke="#fff" stroke-width="1.100"/><path d="M10.500 5a3.500 3.500 0 0 1 0 5M12.500 3a6 6 0 0 1 0 9M14.500 1a9 9 0 0 1 0 13" fill="none" stroke="#fff" stroke-width="1.100"/></svg>
 <svg class="abs" style="left:1088px;top:13px" width="25" height="14" viewBox="0 0 25 14"><rect x=".7" y=".7" width="23.600" height="12.600" rx="1.500" fill="none" stroke="#fff" stroke-width="1.300"/><path d="M3.500 4h18M3.500 7h18" stroke="#fff" stroke-width="1.300" stroke-dasharray="1.500 1.500"/><path d="M6 10.200h13" stroke="#fff" stroke-width="1.300"/></svg>
 <div class="t" style="left:1129px;top:14px;font-size:11px;line-height:13px;color:#fff;letter-spacing:-.5px">ESP</div>
 <div class="t" style="left:1178px;top:5px;font-size:11.400px;line-height:13px;color:#fff;letter-spacing:-.4px">19:33</div>
 <div class="t" style="left:1163px;top:22px;font-size:11.400px;line-height:13px;color:#fff;letter-spacing:-.05px">21/04/2021</div>
 <svg class="abs" style="left:1238px;top:12px" width="18" height="17" viewBox="0 0 18 17"><path d="M.5.500h15.500v11.500H7l-3.500 3.500v-3.500h-3z" fill="#fff"/><path d="M3 3.500h10.500M3 6h10.500M3 8.500h7" stroke="#1b222d" stroke-width="1.100"/><circle cx="14.500" cy="12.500" r="3" fill="#1b222d" stroke="#fff" stroke-width="1"/></svg>
 <div class="abs" style="left:1275px;top:4px;width:1px;height:32px;background:#6a7078"></div>
</div>

</body>
</html>
